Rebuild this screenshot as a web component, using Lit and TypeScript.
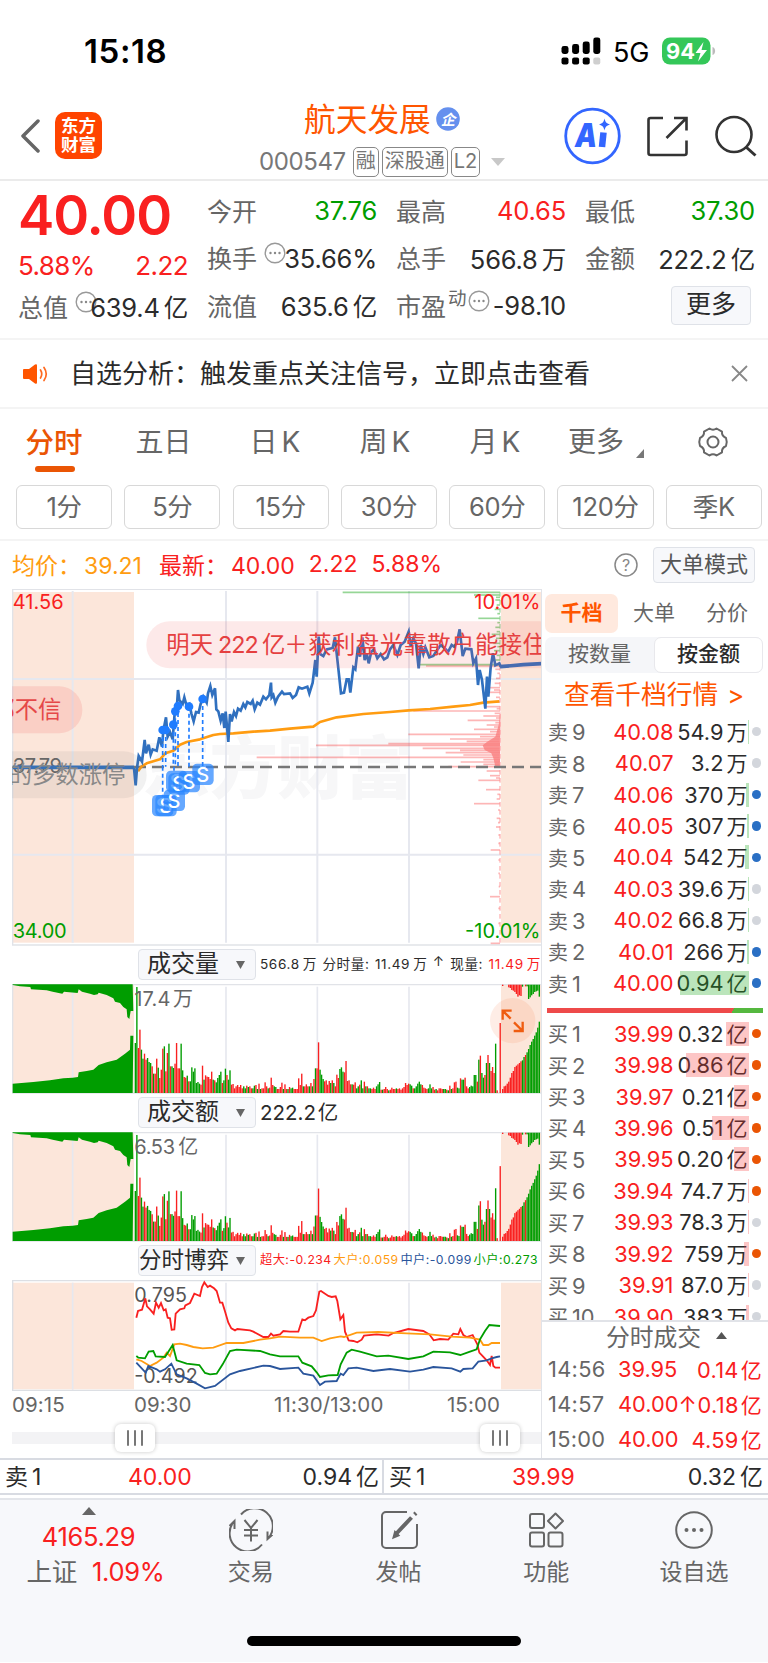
import { LitElement, html, svg, css } from 'lit';
import { customElement, property } from 'lit/decorators.js';
import { classMap } from 'lit/directives/class-map.js';

type Points = number[];

const UP = '#f92020';
const DOWN = '#009d00';
const GRID_X = [218, 678, 952, 1227];

const join = (a: Points, b: Points) =>
  [...a, ...b.map((v, i) => (i % 2 ? v : v + 810))].join(' ');

const PRICE = join(
  [402, 564, 407, 616, 411, 564, 416, 528, 426, 545, 434, 480, 438, 520, 446, 494, 452, 524, 458, 508, 470, 512, 478, 472, 486, 500, 490, 452, 498, 412, 503, 470, 510, 456, 518, 478, 524, 400, 530, 390, 534, 330, 538, 360, 548, 372, 553, 352, 560, 378, 568, 372, 574, 400, 581, 424, 588, 396, 596, 398, 602, 372, 610, 350, 620, 368, 624, 340, 631, 318, 637, 345, 645, 325, 649, 388, 655, 394, 662, 422, 668, 400, 673, 444, 677, 395, 685, 486, 690, 402, 695, 424, 702, 396, 708, 408, 714, 386, 722, 392, 730, 372, 736, 382, 742, 366, 752, 372, 758, 362, 764, 388, 772, 368, 780, 374, 790, 350, 798, 358, 808, 345, 813, 308],
  [5, 352, 10, 345, 16, 368, 24, 350, 36, 335, 42, 342, 60, 340, 68, 354, 78, 345, 86, 322, 96, 326, 112, 320, 118, 340, 128, 308, 136, 240, 140, 290, 146, 170, 150, 222, 160, 228, 170, 208, 188, 204, 195, 172, 200, 220, 206, 275, 213, 340, 222, 338, 230, 298, 236, 298, 241, 338, 250, 262, 256, 268, 264, 200, 270, 230, 277, 172, 284, 240, 290, 220, 296, 250, 304, 215, 312, 208, 322, 235, 332, 222, 342, 238, 352, 232, 360, 208, 370, 195, 382, 225, 392, 195, 404, 185, 416, 155, 422, 198, 430, 175, 438, 190, 446, 265, 452, 195, 460, 222, 466, 202, 478, 232, 490, 228, 500, 212, 512, 195, 524, 205, 534, 216, 545, 195, 552, 200, 560, 190, 569, 148, 578, 228, 586, 206, 604, 208, 610, 250, 618, 235, 624, 315, 629, 270, 636, 300, 646, 386, 651, 290, 655, 350, 662, 262, 669, 220, 676, 256, 688, 250, 692, 260],
);

const AVERAGE = join(
  [414, 574, 424, 560, 440, 550, 460, 544, 480, 538, 496, 520, 520, 512, 540, 494, 560, 486, 600, 478, 640, 465, 660, 462, 700, 460, 760, 455],
  [0, 452, 60, 446, 130, 440, 150, 426, 200, 412, 280, 402, 360, 396, 416, 391, 480, 387, 550, 380, 600, 375, 640, 368, 688, 364],
);

// [y, length] of the chips histogram growing leftwards from the close.
const CHIPS_GREEN = [[37, 472], [45, 78], [52, 12], [60, 14], [75, 10], [88, 16], [101, 8], [115, 65], [128, 8], [142, 14], [155, 10], [163, 25], [175, 12], [190, 20], [200, 8], [212, 18], [226, 10], [240, 14], [254, 240]];
const CHIPS_RED = [
  [258, 222], [268, 14], [280, 8], [295, 12], [310, 16], [323, 45], [330, 18], [337, 30], [352, 12], [366, 18], [380, 45], [386, 10], [393, 260], [400, 16], [408, 50], [414, 12], [421, 97], [428, 14], [435, 40], [441, 18], [448, 78], [455, 30], [463, 275], [470, 60], [477, 150], [484, 100], [491, 335], [496, 552], [505, 232], [511, 120], [518, 163], [525, 110], [532, 730], [539, 50], [546, 118], [553, 50], [560, 155], [573, 40], [587, 30], [594, 12], [601, 65], [629, 42], [643, 8], [657, 10], [671, 78], [690, 6], [715, 10], [728, 6], [741, 12], [765, 5], [790, 5], [810, 28], [840, 5], [880, 5], [920, 4], [950, 30], [985, 5], [1030, 5], [1090, 28],
];

const SELL_DOTS = [[488, 450], [497, 450], [520, 434], [526, 394], [534, 378], [567, 380], [608, 357]];
const SELL_TAGS = [[487, 677], [497, 677], [522, 661], [529, 604], [536, 612], [567, 605], [608, 583]];

// One bar a minute: sign gives the colour, value the height.
const VOLUME = [
  -150, -318, 135, 190, -130, -103, 118, 100, -105, -93, -90, 80, -58, 58, 103, -76, 45, 70, 133, -140, 65, 120, -148, 80, -80, -75, 88, 150, 74, 74,
  -148, -68, 48, 46, -52, 35, -35, -77, -64, -74, -30, -33, -28, 25, 82, -40, 53, 49, 48, 42, 64, -40, 38, -32, -45, -54, -64, 30, -38, -73,
  54, -40, -68, 25, 27, 14, 20, 24, 18, 24, 14, -20, -14, 22, -18, 20, 14, -14, -22, 24, -12, 28, -12, 14, 14, 32, 20, -14, 16, 46,
  24, -20, -18, 12, 12, 18, 31, -12, 26, 12, -12, 18, -14, -16, 12, 12, 12, 44, 24, 58, -20, 20, 26, 20, -20, 30, -20, 42, -74, 74,
  152, -70, -55, -42, 35, 38, 25, 36, -30, 38, -30, 20, 55, 45, -72, -77, -64, 62, 96, 36, 38, 26, -26, 25, 32, -14, -20, 25, -38, -14,
  34, -20, 20, -14, -14, 12, 16, 12, -20, -26, -33, 10, -10, 12, 18, 12, -8, 10, 16, 12, 12, -14, 12, 14, 10, 14, 18, 30, 24, 28,
  -26, -22, 14, -14, -20, -28, -34, -26, 24, 16, 14, 12, -14, -26, -14, 18, 10, -12, 8, 14, 14, 12, -12, -12, 10, -8, 22, -12, 14, 32,
  34, -16, -14, 44, -40, -40, 46, 20, 14, -18, -22, -20, -54, -54, 34, -100, 112, -60, -46, 54, -90, 114, -90, 66, 78, 60, -148, 8, 0, 210,
];
const AFTER_BOTTOM = [12, 20, 22, 28, 34, 46, 60, 66, 78, 82, 86, 90, 95, -98, -108, 114, -122, -132, -144, -154, -162, -172, -182, -196, -214];
const AFTER_TOP = [4, 0, 0, 0, 8, 10, 16, 18, 22, 28, 36, 32, 34, -6, 0, 5, -5, -43, -38, -32, -28, -22, -20, -18, -36];
const PRE_BOTTOM = [38, 28, 100, 33, 150, 38, 190, 44, 218, 46, 234, 48, 236, 62, 260, 66, 280, 70, 296, 84, 320, 92, 350, 100, 375, 118, 390, 130, 391, 172, 400, 172];
const PRE_TOP = [38, 2, 60, 6, 91, 8, 93, 15, 140, 18, 158, 22, 187, 28, 192, 22, 233, 26, 236, 15, 246, 22, 270, 28, 282, 32, 293, 30, 296, 25, 320, 32, 340, 42, 345, 52, 360, 56, 370, 68, 380, 75, 382, 98, 388, 104, 392, 80, 400, 80];

const FLOWS = [
  {
    color: UP,
    points: join(
      [409, 230, 414, 210, 426, 206, 436, 172, 441, 196, 450, 205, 461, 218, 468, 185, 476, 200, 483, 186, 491, 208, 497, 205, 503, 230, 510, 232, 515, 266, 523, 265, 527, 218, 540, 205, 553, 202, 556, 193, 570, 186, 583, 158, 600, 165, 606, 138, 613, 124, 623, 138, 630, 134, 642, 142, 650, 150, 660, 185, 667, 185, 674, 208, 685, 245, 694, 262, 705, 268, 712, 264, 750, 268, 760, 272, 790, 288, 805, 288],
      [3, 278, 10, 284, 30, 280, 40, 270, 60, 272, 85, 272, 92, 250, 97, 235, 105, 238, 115, 230, 130, 225, 138, 208, 148, 152, 153, 150, 175, 165, 185, 168, 197, 166, 202, 180, 211, 235, 220, 222, 225, 272, 236, 298, 250, 300, 262, 304, 275, 296, 282, 284, 320, 280, 356, 284, 370, 276, 415, 264, 460, 270, 478, 280, 491, 298, 510, 294, 535, 296, 550, 278, 565, 280, 571, 264, 580, 282, 590, 288, 608, 282, 622, 310, 628, 335, 650, 358, 660, 372, 665, 345, 670, 375, 676, 380, 690, 380],
    ),
  },
  {
    color: '#ff9c11',
    points: join(
      [409, 355, 425, 360, 450, 375, 470, 365, 490, 350, 500, 335, 510, 345, 523, 310, 540, 308, 560, 312, 580, 318, 608, 322, 640, 320, 680, 306, 730, 306, 780, 296],
      [0, 292, 30, 287, 90, 290, 130, 290, 155, 300, 180, 292, 212, 286, 222, 288, 260, 275, 325, 273, 410, 277, 480, 280, 545, 287, 600, 290, 630, 296, 640, 312, 655, 312, 665, 306, 690, 306],
    ),
  },
  {
    color: DOWN,
    points: join(
      [409, 345, 415, 350, 435, 352, 446, 332, 460, 330, 467, 346, 495, 348, 518, 312, 530, 358, 560, 368, 598, 372, 615, 396, 630, 400, 650, 398, 668, 370, 690, 330, 710, 326, 780, 330],
      [0, 340, 30, 346, 85, 346, 97, 365, 125, 376, 140, 394, 150, 408, 175, 403, 203, 402, 212, 370, 230, 335, 245, 326, 270, 332, 320, 346, 355, 344, 415, 354, 460, 346, 490, 332, 540, 334, 571, 342, 600, 332, 620, 325, 630, 295, 645, 270, 658, 252, 690, 255],
    ),
  },
  {
    color: '#2a559c',
    points: join(
      [409, 365, 437, 395, 445, 375, 470, 385, 480, 392, 495, 385, 514, 368, 530, 400, 560, 412, 590, 428, 615, 442, 645, 435, 690, 400, 720, 390, 790, 374],
      [0, 375, 30, 384, 85, 380, 100, 398, 130, 404, 150, 432, 165, 422, 200, 420, 212, 398, 220, 402, 235, 382, 260, 380, 310, 390, 360, 384, 420, 392, 460, 386, 490, 378, 545, 382, 571, 392, 580, 384, 608, 382, 625, 362, 650, 358, 665, 352, 680, 348, 690, 346],
    ),
  },
];

interface Level {
  name: string;
  price: string;
  amount: string;
  unit: string;
  bar: number;
  active: boolean;
}

const level = (name: string, price: string, amount: string, unit: string, bar: number, active: boolean): Level =>
  ({ name, price, amount, unit, bar, active });

const ASKS = [
  level('9', '40.08', '54.9', '万', 0.6, false),
  level('8', '40.07', '3.2', '万', 0, false),
  level('7', '40.06', '370', '万', 2.5, true),
  level('6', '40.05', '307', '万', 2, true),
  level('5', '40.04', '542', '万', 4, true),
  level('4', '40.03', '39.6', '万', 0.5, false),
  level('3', '40.02', '66.8', '万', 0.6, false),
  level('2', '40.01', '266', '万', 2, true),
  level('1', '40.00', '0.94', '亿', 69, true),
];

const BIDS = [
  level('1', '39.99', '0.32', '亿', 23, true),
  level('2', '39.98', '0.86', '亿', 63, true),
  level('3', '39.97', '0.21', '亿', 15, true),
  level('4', '39.96', '0.51', '亿', 37, true),
  level('5', '39.95', '0.20', '亿', 15, true),
  level('6', '39.94', '74.7', '万', 0.8, true),
  level('7', '39.93', '78.3', '万', 0.8, false),
  level('8', '39.92', '759', '万', 5, true),
  level('9', '39.91', '87.0', '万', 0.8, false),
  level('10', '39.90', '383', '万', 2.5, false),
];

const base = css`
  :host {
    display: block;
    font-family: 'Inter', 'Noto Sans CJK SC', sans-serif;
    color: #2b2b2b;
  }

  * {
    box-sizing: border-box;
  }

  svg {
    display: block;
    flex: none;
  }

  .red { color: #f92020; }
  .green { color: #009d00; }
`;

@customElement('status-bar')
export class StatusBar extends LitElement {
  static styles = [base, css`
    :host {
      height: 92px;
    }

    .bar {
      display: flex;
      align-items: center;
      height: 102px;
      padding: 0 52px 0 84px;
      color: #000;
    }

    .time {
      flex: 1;
      font-size: 33px;
      font-weight: 600;
      letter-spacing: 0.6px;
    }

    .net {
      width: 61px;
      padding-left: 12px;
      font-size: 27px;
      letter-spacing: -0.2px;
      padding-top: 2px;
    }
  `];

  render() {
    return html`
      <div class="bar">
        <div class="time">15:18</div>
        <svg width="40" height="28" viewBox="0 0 40 28">
          ${[8, 10, 12.5, 16.5].map((h, i) => svg`
            <rect x=${0.5 + i * 10.6} y=${17 - h} width="7" height=${h} rx="2.4" />
            <rect x=${0.5 + i * 10.6} y="20.5" width="7" height="7" rx="2" fill=${i === 3 ? '#cfcfcf' : '#000'} />
          `)}
        </svg>
        <div class="net">5G</div>
        <svg width="54" height="28" viewBox="0 0 54 28">
          <rect x="0" y="0.5" width="48.5" height="27" rx="8" fill="#34c759" />
          <path d="M50.5 10c3.5 1 3.5 7 0 8z" fill="#bbb" />
          <text x="4" y="21.8" font-size="21.5" font-weight="700" fill="#fff" textLength="29" lengthAdjust="spacingAndGlyphs">94</text>
          <path d="M41.5 5l-8 11h5l-2.5 8.500 9-11.500h-5.500z" fill="#fff" />
        </svg>
      </div>
    `;
  }
}

@customElement('title-bar')
export class TitleBar extends LitElement {
  static styles = [base, css`
    :host {
      height: 89px;
      border-bottom: 2px solid #ebebeb;
    }

    .bar {
      display: grid;
      grid-template-columns: 105px 1fr 206px;
      height: 87px;
      padding-left: 20px;
    }

    .side {
      display: flex;
      align-items: center;
    }

    .logo {
      width: 47px;
      height: 47px;
      margin-left: 15px;
      border-radius: 10px;
      background: #ff4400;
      color: #fff;
      font-size: 17.5px;
      font-weight: 700;
      line-height: 19px;
      padding-top: 4px;
      text-align: center;
    }

    .name {
      display: flex;
      align-items: center;
      gap: 5px;
      height: 36px;
      margin: 7px 0 0 179px;
      color: #ff5500;
      font-size: 31.7px;
      white-space: nowrap;
    }

    .name svg {
      margin-top: 3px;
    }

    .code {
      display: flex;
      align-items: center;
      gap: 3px;
      margin: 12px 0 0 134px;
      color: #777;
      font-size: 23px;
      line-height: 30px;
      white-space: nowrap;
    }

    .code b {
      font-weight: 400;
      font-size: 24px;
      margin-right: 4px;
      letter-spacing: -0.4px;
    }

    .tag {
      border: 1.5px solid #888;
      border-radius: 5px;
      height: 30px;
      padding: 0 2px;
      font-size: 20px;
      line-height: 26px;
    }

    .code svg {
      margin-left: 8px;
    }
  `];

  render() {
    return html`
      <div class="bar">
        <div class="side">
          <svg width="20" height="36" viewBox="0 0 20 36" fill="none" stroke="#666" stroke-width="3.500" stroke-linecap="round" stroke-linejoin="round">
            <path d="M18 3L3 18l15 15" />
          </svg>
          <div class="logo">东方<br />财富</div>
        </div>
        <div>
          <div class="name">
            航天发展
            <svg width="24" height="24" viewBox="0 0 24 24">
              <circle cx="12" cy="12" r="11.800" fill="#6590ee" />
              <text x="12" y="17.500" font-size="14.500" font-weight="700" font-style="italic" fill="#fff" text-anchor="middle">企</text>
            </svg>
          </div>
          <div class="code">
            <b>000547</b>
            <span class="tag">融</span>
            <span class="tag">深股通</span>
            <span class="tag">L2</span>
            <svg width="14" height="8" viewBox="0 0 14 8"><path d="M0 0h14L7 8z" fill="#c8c8c8" /></svg>
          </div>
        </div>
        <div class="side">
          <svg width="206" height="60" viewBox="0 0 206 60" fill="none">
            <circle cx="30.500" cy="30" r="26.800" stroke="#3366ff" stroke-width="2.800" />
            <text x="13" y="41" font-size="33" font-weight="900" font-style="italic" fill="#3366ff" textLength="22" lengthAdjust="spacingAndGlyphs">A</text>
            <path d="M41.500 26.500l-1.500 14.500" stroke="#3366ff" stroke-width="6.500" />
            <path d="M42.500 12.500c.9 3.800 1.800 4.800 5.500 6-3.700 1.200-4.600 2.200-5.500 6-.9-3.800-1.800-4.800-5.500-6 3.700-1.200 4.600-2.200 5.500-6z" fill="#3366ff" />
            <g stroke="#333" stroke-width="2.600">
              <path d="M101 12H88.500a2 2 0 0 0-2 2v33a2 2 0 0 0 2 2h34a2 2 0 0 0 2-2V34.500" />
              <path d="M112 12h12.500v12.500M124 12.500L104.500 32" />
              <circle cx="172" cy="28.500" r="17.500" />
              <path d="M184 41l9.500 8.500" stroke-width="3" />
            </g>
          </svg>
        </div>
      </div>
    `;
  }
}

const hint = html`
  <svg class="hint" width="22" height="22" viewBox="0 0 22 22">
    <circle cx="11" cy="11" r="9.800" fill="#fff" stroke="#999" stroke-width="1.400" />
    <g fill="#888"><circle cx="6.500" cy="11" r="1.200" /><circle cx="11" cy="11" r="1.200" /><circle cx="15.500" cy="11" r="1.200" /></g>
  </svg>
`;

@customElement('quote-summary')
export class QuoteSummary extends LitElement {
  static styles = [base, css`
    :host {
      height: 159px;
      border-bottom: 2px solid #f4f4f4;
    }

    .grid {
      display: grid;
      grid-template-columns: repeat(4, 170px);
      gap: 19px;
      padding: 3px 0 0 18px;
    }

    .price {
      height: 62px;
      line-height: 62px;
      font-size: 54.500px;
      font-weight: 600;
      letter-spacing: -1.1px;
      white-space: nowrap;
    }

    .row {
      display: flex;
      align-items: center;
      height: 47.5px;
      font-size: 25px;
      white-space: nowrap;
    }

    .row.change {
      height: 36px;
      padding-top: 3px;
      font-size: 26px;
      letter-spacing: -0.6px;
      justify-content: space-between;
    }

    .col:not(:first-child) {
      padding-top: 2px;
    }

    .label {
      color: #666;
      font-size: 25px;
    }

    .value {
      margin: 2px 0 0 auto;
      letter-spacing: -0.2px;
      font-size: 25.5px;
    }

    .value i {
      font-style: normal;
      margin-left: 4px;
      font-size: 24.500px;
    }

    .hint {
      margin: -8px -12px 0 7px;
    }

    sup {
      font-size: 18.5px;
      line-height: 20px;
      margin-top: -13px;
      margin-left: 2px;
      color: #666;
    }

    sup + .hint {
      margin-left: 1px;
    }

    .more {
      width: 80px;
      height: 39px;
      margin: 5px 4px 0 auto;
      border: 1.5px solid #dfe2e8;
      border-radius: 4px;
      background: #f7f8fb;
      text-align: center;
      font-size: 25px;
      line-height: 35px;
    }
  `];

  cell(label: string, value: string, unit = '', tone = '', mark: unknown = '') {
    return html`
      <div class="row">
        <span class="label">${label}</span>${mark}
        <span class="value ${tone}">${value}${unit ? html`<i>${unit}</i>` : ''}</span>
      </div>
    `;
  }

  render() {
    return html`
      <div class="grid">
        <div class="col">
          <div class="price red">40.00</div>
          <div class="row change red"><span>5.88%</span><span>2.22</span></div>
          ${this.cell('总值', '639.4', '亿', '', hint)}
        </div>
        <div class="col">
          ${this.cell('今开', '37.76', '', 'green')}
          ${this.cell('换手', '35.66%', '', '', hint)}
          ${this.cell('流值', '635.6', '亿')}
        </div>
        <div class="col">
          ${this.cell('最高', '40.65', '', 'red')}
          ${this.cell('总手', '566.8', '万')}
          ${this.cell('市盈', '-98.10', '', '', html`<sup>动</sup>${hint}`)}
        </div>
        <div class="col">
          ${this.cell('最低', '37.30', '', 'green')}
          ${this.cell('金额', '222.2', '亿')}
          <div class="more">更多</div>
        </div>
      </div>
    `;
  }
}

@customElement('signal-notice')
export class SignalNotice extends LitElement {
  static styles = [base, css`
    :host {
      height: 69px;
      border-bottom: 2px solid #f4f4f4;
    }

    .bar {
      display: flex;
      align-items: center;
      height: 67px;
      padding: 0 20px 0 22px;
      font-size: 26px;
    }

    .text {
      flex: 1;
      padding-left: 21px;
      margin-top: -4px;
      white-space: nowrap;
    }
  `];

  render() {
    return html`
      <div class="bar">
        <svg width="27" height="22" viewBox="0 0 27 22">
          <path d="M1 7q0-1 1-1h5l6-4.500q2-1 2 1v17q0 2-2 1L7 16H2q-1 0-1-1z" fill="#ff5500" />
          <path d="M18.500 7q2.500 4 0 8M22 4.500q4.500 6.500 0 13" fill="none" stroke="#ff6a20" stroke-width="1.700" stroke-linecap="round" />
        </svg>
        <div class="text">自选分析：触发重点关注信号，立即点击查看</div>
        <svg width="17" height="17" viewBox="0 0 17 17" stroke="#888" stroke-width="1.800"><path d="M1 1l15 15M16 1L1 16" /></svg>
      </div>
    `;
  }
}

@customElement('period-tabs')
export class PeriodTabs extends LitElement {
  static styles = [base, css`
    :host {
      height: 132px;
      border-bottom: 2px solid #f4f4f4;
    }

    .tabs {
      display: grid;
      grid-template-columns: repeat(7, 110px);
      height: 76px;
      color: #666;
      font-size: 28px;
      line-height: 67px;
      text-align: center;
      white-space: nowrap;
    }

    .tab span {
      margin-left: 4px;
    }

    .tab:nth-child(2) {
      text-indent: -3px;
    }

    .active {
      color: #ea5504;
      font-weight: 500;
      font-size: 28.500px;
      text-indent: -2px;
    }

    .active::after {
      content: '';
      display: block;
      width: 40px;
      height: 6px;
      margin: -10px auto 0;
      border-radius: 3px;
      background: #ea5504;
    }

    .more {
      display: flex;
      padding-left: 18px;
    }

    .more svg {
      margin: 40px 0 0 12px;
    }

    .gear {
      margin: 17px 0 0 37px;
    }

    .periods {
      display: flex;
      gap: 12.1px;
      padding-left: 16px;
    }

    .period {
      flex: none;
      width: 96.2px;
      height: 44px;
      border: 1.5px solid #d8d8d8;
      border-radius: 6px;
      color: #666;
      font-size: 25.500px;
      line-height: 42px;
      text-align: center;
      letter-spacing: -0.3px;
    }
  `];

  render() {
    return html`
      <div class="tabs">
        <div class="tab active">分时</div>
        <div class="tab">五日</div>
        <div class="tab">日<span>K</span></div>
        <div class="tab">周<span>K</span></div>
        <div class="tab">月<span>K</span></div>
        <div class="tab more">更多<svg width="8" height="9" viewBox="0 0 8 9"><path d="M8 0v9H0z" fill="#777" /></svg></div>
        <svg class="gear" width="32" height="32" viewBox="0 0 32 32" fill="none" stroke="#666" stroke-width="2">
          <path d="M12.500 2.500q3.500 2.500 7 0l5.500 3.200q-.5 4.300 4 6.300 1.500 4 0 8-4.500 2-4 6.300l-5.500 3.200q-3.500-2.500-7 0L7 26.300Q7.500 22 3 20q-1.500-4 0-8 4.500-2 4-6.300z" stroke-linejoin="round" />
          <circle cx="16" cy="16" r="5.500" />
        </svg>
      </div>
      <div class="periods">
        ${['1分', '5分', '15分', '30分', '60分', '120分', '季K'].map((p) => html`<div class="period">${p}</div>`)}
      </div>
    `;
  }
}

@customElement('price-chart')
export class PriceChart extends LitElement {
  static styles = [base, css`
    text {
      font-size: 60px;
    }

    .watermark {
      font-size: 205px;
      font-weight: 900;
      fill: #f7f7f8;
    }

    .chat {
      font-size: 70px;
    }

    .chat.long {
      letter-spacing: 1.5px;
    }
  `];

  render() {
    return html`
      <svg width="530" height="357" viewBox="36 27 1590 1071">
        <rect x="38" y="36" width="364" height="1052" fill="#fce6da" />
        <rect x="1503" y="36" width="122" height="1052" fill="#fce6da" />
        <text class="watermark" x="425" y="640" textLength="815">东方财富</text>
        <g stroke="#e6e8ef" stroke-width="6">
          ${GRID_X.map((x) => svg`<path d="M${x} 33V1088" />`)}
          <path d="M36 297H1626M36 824H1626" />
        </g>
        <path d="M36 28H1626M36 1095H1626M38 28V1095" fill="none" stroke="#e1e3e8" stroke-width="4" />

        <g stroke="#f92020" stroke-opacity="0.33" stroke-width="5">
          ${CHIPS_RED.map(([y, len]) => svg`<path d="M1500 ${y}h${-len}" />`)}
        </g>
        <path d="M1502 390l-6 45-10 35-22 14-16 12 6 14 20 10 6 14 6 26 14 4z" fill="#f98080" opacity="0.8" />
        <g stroke="#17a317" stroke-opacity="0.45" stroke-width="5">
          ${CHIPS_GREEN.map(([y, len]) => svg`<path d="M1500 ${y}h${-len}" />`)}
        </g>
        <path d="M1500 36V256" stroke="#8fd08f" stroke-width="3" stroke-dasharray="14 10" />
        <path d="M1500 258V1090" stroke="#f99" stroke-width="3" stroke-dasharray="14 10" />

        <path d="M402 561H1626" stroke="#777" stroke-width="7" stroke-dasharray="36 18" />
        <text x="38" y="579" fill="#666" textLength="148">37.79</text>
        <path d="M38 562H402" stroke="#3070bf" stroke-width="11" />
        <polyline points=${AVERAGE} fill="none" stroke="#ff9c11" stroke-width="8" stroke-linejoin="round" />
        <polyline points=${PRICE} fill="none" stroke="#3070bf" stroke-width="8" />
        <path d="M1500 260L1570 254 1626 251" fill="none" stroke="#3070bf" stroke-width="11" />

        ${SELL_DOTS.map(([x, y]) => svg`
          <path d="M${x} ${y}V560" stroke="#1f7cff" stroke-width="5" stroke-dasharray="12 9" />
          <circle cx=${x} cy=${y} r="13" fill="#1f7cff" />
        `)}
        <path d="M488 560V650M522 560V640" stroke="#1f7cff" stroke-width="5" stroke-dasharray="12 9" />
        ${SELL_TAGS.map(([x, y]) => svg`
          <rect x=${x - 31} y=${y - 32} width="64" height="64" rx="14" fill="#2a86ff" fill-opacity="0.72" />
          <text x=${x} y=${y + 22} text-anchor="middle" fill="#fff" font-weight="500">S</text>
        `)}

        <rect x="439" y="124" width="1250" height="141" rx="70" fill="#f04848" fill-opacity="0.12" />
        <g fill="#e54040">
          <text class="chat" x="499" y="219">明天</text>
          <text class="chat" x="654" y="219" textLength="122">222</text>
          <text class="chat" x="786" y="219">亿</text>
          <text class="chat long" x="853" y="219">＋获利盘光靠散户能接住</text>
        </g>
        <rect x="-120" y="319" width="367" height="141" rx="70" fill="#f04848" fill-opacity="0.14" />
        <text class="chat" x="184" y="414" fill="#e54848" text-anchor="end">都不信</text>
        <rect x="-120" y="514" width="560" height="141" rx="70" fill="#777" fill-opacity="0.1" />
        <text class="chat" x="376" y="609" fill="#888" text-anchor="end">的多数涨停</text>

        <text x="38" y="87" fill=${UP} textLength="153">41.56</text>
        <text x="38" y="1073" fill=${DOWN} textLength="162">34.00</text>
        <text x="1423" y="87" fill=${UP} textLength="198">10.01%</text>
        <text x="1395" y="1073" fill=${DOWN} textLength="226">-10.01%</text>
      </svg>
    `;
  }
}

@customElement('volume-chart')
export class VolumeChart extends LitElement {
  @property({ type: String }) peak = '';
  @property({ type: String }) unit = '';
  @property({ type: Number }) drift = 0;
  @property({ type: Boolean }) expandable = false;

  static styles = [base, css`
    text {
      font-size: 60px;
      fill: #666;
    }
  `];

  bars(values: number[], start: number, hanging = false) {
    return values.map((v, i) => {
      const h = Math.abs(v) * (hanging ? 1 : 1 + (this.drift * (start + i * 4.58 - 402)) / 1100);
      return svg`<rect x=${start + i * 4.58} y=${hanging ? 2 : 327 - h} width="4.1" height=${h} fill=${v > 0 ? UP : DOWN} />`;
    });
  }

  area(values: number[], top: boolean) {
    const pairs = [];
    for (let i = 0; i < values.length; i += 2) {
      pairs.push(`${values[i]} ${top ? values[i + 1] + 1 : 327 - values[i + 1]}`);
    }
    const edge = top ? 1 : 327;
    return svg`<polygon points=${`38 ${edge} ${pairs.join(' ')} 398 ${edge}`} fill=${DOWN} />`;
  }

  render() {
    const narrow = this.peak.startsWith('1');
    return html`
      <svg width="530" height="110" viewBox="36 0 1590 330">
        <rect x="38" y="2" width="364" height="325" fill="#fce6da" />
        <rect x="1503" y="2" width="122" height="325" fill="#fce6da" />
        <g stroke="#e6e8ef" stroke-width="5">
          ${GRID_X.map((x) => svg`<path d="M${x} 8V327" />`)}
        </g>
        <path d="M36 2H1626M36 327H1626M38 2V327" stroke="#e1e3e8" stroke-width="4" />
        ${this.area(PRE_TOP, true)}${this.area(PRE_BOTTOM, false)}
        ${this.bars(VOLUME, 404)}
        ${this.bars(AFTER_BOTTOM, 1506)}
        ${this.bars(AFTER_TOP, 1506, true)}
        <text x="403" y="65" textLength=${narrow ? 108 : 122}>${this.peak}</text>
        <text x=${narrow ? 519 : 535} y="65">${this.unit}</text>
        ${this.expandable ? svg`
          <circle cx="1538" cy="110" r="68" fill="#f5743c" fill-opacity="0.13" />
          <path d="M1532 104L1508 80M1508 107V80H1535M1542 115L1568 141M1568 113V141H1541" fill="none" stroke="#ef5c10" stroke-width="7" />
        ` : ''}
      </svg>
    `;
  }
}

@customElement('flow-chart')
export class FlowChart extends LitElement {
  static styles = [base, css`
    text {
      font-size: 59px;
      fill: #555;
    }
  `];

  render() {
    return html`
      <svg width="530" height="112" viewBox="36 117 1590 336">
        <rect x="38" y="125" width="364" height="320" fill="#fce6da" />
        <rect x="1503" y="125" width="122" height="320" fill="#fce6da" />
        <g stroke="#e6e8ef" stroke-width="5">
          ${GRID_X.map((x) => svg`<path d="M${x} 125V446" />`)}
        </g>
        <path d="M36 119H1626M36 448H1626M38 119V448" stroke="#dcdfe4" stroke-width="4" />
        <text x="403" y="183" textLength="158">0.795</text>
        <text x="403" y="426" textLength="190">-0.492</text>
        ${FLOWS.map((f) => svg`<polyline points=${f.points} fill="none" stroke=${f.color} stroke-width="5.500" />`)}
      </svg>
    `;
  }
}

@customElement('chart-column')
export class ChartColumn extends LitElement {
  static styles = [base, css`
    :host {
      flex: none;
      width: 541px;
      padding-left: 12px;
    }

    .head {
      display: flex;
      align-items: center;
      height: 38px;
      padding: 0 0 1px 126px;
      white-space: nowrap;
    }

    .select {
      display: flex;
      align-items: center;
      width: 118px;
      height: 31px;
      margin-right: 4px;
      padding-left: 8px;
      border: 1.5px solid #dfe2e8;
      border-radius: 4px;
      background: #f7f8fb;
      font-size: 24px;
      line-height: 26px;
    }

    .select span {
      margin-top: -1px;
    }

    .select.tight {
      padding-left: 0;
      font-size: 22.500px;
    }

    .select svg {
      margin-left: auto;
      margin-right: 10px;
    }

    .small {
      flex: 1;
      font-size: 13.6px;
      display: flex;
      justify-content: space-between;
      margin-top: -3px;
      letter-spacing: 0.6px;
    }

    .small.flows {
      font-size: 12.2px;
      padding-right: 3px;
      letter-spacing: 0.5px;
    }

    .sum {
      margin-top: -4px;
      font-size: 20.5px;
    }

    .times {
      display: grid;
      grid-template-columns: 122px 140px 1fr auto;
      height: 28px;
      padding-right: 41px;
      color: #666;
      font-size: 20.5px;
      letter-spacing: 0.1px;
      line-height: 26px;
    }

    .slider {
      display: flex;
      align-items: center;
      height: 38px;
      padding: 0 21px 0 103px;
      justify-content: space-between;
      background: linear-gradient(#f3f3f5, #f3f3f5) 0 12px / 529px 12px no-repeat;
    }

    .handle {
      display: flex;
      justify-content: center;
      gap: 4.5px;
      width: 40px;
      height: 28px;
      margin-top: -3px;
      padding-top: 6px;
      border-radius: 6px;
      background: #fff;
      box-shadow: 0 0 4px rgba(0, 0, 0, 0.22);
    }

    .handle i {
      width: 2.4px;
      height: 16px;
      border-radius: 1px;
      background: #777;
    }

    .orange { color: #ff9c11; }
    .blue { color: #2a559c; }
  `];

  select(label: string, tight = false) {
    return html`
      <div class=${classMap({ select: true, tight })}>
        <span>${label}</span>
        <svg width="9" height="8" viewBox="0 0 9 8"><path d="M0 0h9L4.500 8z" fill="#666" /></svg>
      </div>
    `;
  }

  render() {
    const handle = html`<div class="handle"><i></i><i></i><i></i></div>`;
    return html`
      <price-chart></price-chart>
      <div class="head">
        ${this.select('成交量')}
        <div class="small">
          <span>566.8&#8201;万</span><span>分时量:</span><span>11.49&#8201;万</span><span>↑</span><span>现量:</span><span class="red">11.49&#8201;万</span>
        </div>
      </div>
      <volume-chart peak="17.4" unit="万" expandable></volume-chart>
      <div class="head">
        ${this.select('成交额')}
        <div class="sum">222.2&#8202;亿</div>
      </div>
      <volume-chart peak="6.53" unit="亿" .drift=${0.07}></volume-chart>
      <div class="head">
        ${this.select('分时博弈', true)}
        <div class="small flows">
          <span class="red">超大:-0.234</span><span class="orange">大户:0.059</span><span class="blue">中户:-0.099</span><span class="green">小户:0.273</span>
        </div>
      </div>
      <flow-chart></flow-chart>
      <div class="times"><span>09:15</span><span>09:30</span><span>11:30/13:00</span><span>15:00</span></div>
      <div class="slider">${handle}${handle}</div>
    `;
  }
}

@customElement('order-book')
export class OrderBook extends LitElement {
  static styles = [base, css`
    :host {
      flex: none;
      width: 227px;
      height: 869px;
      border-left: 1.5px solid #e1e3e8;
      padding-left: 3px;
      background: #fff;
    }

    .tabs {
      display: grid;
      grid-template-columns: 73px 72px 74px;
      height: 39px;
      margin-top: 5px;
      color: #666;
      font-size: 21px;
      line-height: 37px;
      text-align: center;
    }

    .tabs .on {
      border-radius: 7px;
      background: #ffe9de;
      color: #ff5500;
      font-weight: 700;
    }

    .segments {
      display: grid;
      grid-template-columns: 109px 109px;
      height: 36px;
      margin-top: 4px;
      width: 218px;
      border-radius: 7px;
      background: #f5f6f9;
      color: #666;
      font-size: 21px;
      line-height: 33px;
      text-align: center;
    }

    .segments .on {
      border: 1.5px solid #e8e8ec;
      border-radius: 7px;
      background: #fff;
      color: #2b2b2b;
      font-weight: 500;
      line-height: 31px;
    }

    .link {
      display: flex;
      gap: 9px;
      height: 43px;
      padding-left: 19px;
      color: #ff5500;
      font-size: 25.7px;
      line-height: 43px;
      white-space: nowrap;
    }

    .bids {
      height: 302px;
      overflow: hidden;
    }

    .level {
      display: grid;
      grid-template-columns: 50px 75.5px 75px 14px;
      align-items: center;
      height: 31.45px;
      padding-left: 3px;
      font-size: 21.8px;
      white-space: nowrap;
    }

    .who {
      color: #666;
    }

    .who i {
      font-style: normal;
      font-size: 20px;
      margin-right: 4px;
    }

    .cost {
      text-align: right;
    }

    .amount {
      position: relative;
      height: 24px;
      line-height: 24px;
      padding-right: 1px;
      text-align: right;
    }

    .amount i {
      font-style: normal;
      font-size: 21px;
      margin-left: 3px;
    }

    .depth {
      position: absolute;
      top: 0;
      right: 0;
      height: 24px;
      background: rgba(249, 50, 50, 0.28);
    }

    .asks .depth {
      background: rgba(30, 170, 30, 0.3);
    }

    .dot {
      width: 9.5px;
      height: 9.5px;
      margin-left: 3px;
      border-radius: 50%;
      background: #d3d6dc;
    }

    .asks .dot.active { background: #2a6fc4; }
    .bids .dot.active { background: #ea5504; }

    .ratio {
      height: 5px;
      width: 216px;
      margin: 9px 0 5px 2px;
      background: linear-gradient(120deg, #ee4a4a 0 85.5%, #55b83f 85.5%);
    }

    .deals-head {
      display: flex;
      justify-content: center;
      align-items: center;
      gap: 15px;
      height: 31px;
      margin-left: -3px;
      padding: 0 0 2px 23px;
      border-top: 2px solid #e1e3e8;
      color: #666;
      font-size: 23.8px;
    }

    .deal {
      display: grid;
      grid-template-columns: 70px 1fr auto;
      align-items: center;
      height: 35.2px;
      padding: 0 6px 0 3px;
      color: #f92020;
      font-size: 21.8px;
      letter-spacing: 0.3px;
      white-space: nowrap;
    }

    .deal span:first-child {
      color: #666;
    }

    .deal span:nth-child(2) {
      letter-spacing: 0;
    }

    .deal i {
      font-style: normal;
      font-size: 21px;
      margin-left: 2px;
    }
  `];

  row(side: string, l: Level) {
    return html`
      <div class="level">
        <div class="who"><i>${side}</i>${l.name}</div>
        <div class="cost red">${l.price}</div>
        <div class="amount">${l.amount}<i>${l.unit}</i><div class="depth" style="width:${l.bar}px"></div></div>
        <div class=${classMap({ dot: true, active: l.active })}></div>
      </div>
    `;
  }

  render() {
    return html`
      <div class="tabs"><div class="on">千档</div><div>大单</div><div>分价</div></div>
      <div class="segments"><div>按数量</div><div class="on">按金额</div></div>
      <div class="link"><span>查看千档行情</span><span>&gt;</span></div>
      <div class="asks">${ASKS.map((l) => this.row('卖', l))}</div>
      <div class="ratio"></div>
      <div class="bids">${BIDS.map((l) => this.row('买', l))}</div>
      <div class="deals-head">分时成交<svg width="11" height="7" viewBox="0 0 11 7"><path d="M0 7h11L5.500 0z" fill="#555" /></svg></div>
      <div class="deal"><span>14:56</span><span>39.95</span><span>0.14<i>亿</i></span></div>
      <div class="deal"><span>14:57</span><span>40.00↑</span><span>0.18<i>亿</i></span></div>
      <div class="deal"><span>15:00</span><span>40.00</span><span>4.59<i>亿</i></span></div>
    `;
  }
}

@customElement('bottom-nav')
export class BottomNav extends LitElement {
  static styles = [base, css`
    :host {
      height: 164px;
      border-top: 2px solid #e3e5ea;
      background: #f7f8fb;
    }

    .items {
      display: grid;
      grid-template-columns: 177px repeat(4, 147.7px);
      height: 136px;
      color: #666;
      font-size: 23px;
      text-align: center;
    }

    .item {
      display: flex;
      flex-direction: column;
      align-items: center;
      padding-top: 9px;
      line-height: 34px;
    }

    .item svg {
      margin-bottom: 4px;
    }

    .index {
      padding-top: 7px;
      font-size: 25.500px;
      letter-spacing: -0.3px;
      white-space: nowrap;
      color: #f92020;
    }

    .index > svg {
      margin: 0 0 5px;
    }

    .index div {
      height: 35px;
    }

    .index div + div {
      padding-left: 14px;
    }

    .index span {
      color: #666;
      margin-right: 15px;
    }

    .home {
      width: 274px;
      height: 10px;
      margin: 0 auto;
      border-radius: 5px;
      background: #000;
    }
  `];

  render() {
    return html`
      <div class="items">
        <div class="item index">
          <svg width="14" height="8" viewBox="0 0 14 8"><path d="M0 8h14L7 0z" fill="#666" /></svg>
          <div>4165.29</div>
          <div><span>上证</span>1.09%</div>
        </div>
        <div class="item">
          <svg width="44" height="42" viewBox="0 0 44 42" fill="none" stroke="#666" stroke-width="2">
            <path d="M12 5.500A18 18 0 0 1 39.500 29M33 35.500A18 18 0 0 1 4.500 13M.5 17L5.500 12v8M43.500 25.500l-5 4.500v-7.500" />
            <path d="M15.500 11l6.500 8 6.500-8M15 21h14M15 26.500h14M22 19v13.500" />
          </svg>
          交易
        </div>
        <div class="item">
          <svg width="40" height="42" viewBox="0 0 40 42" fill="none" stroke="#666" stroke-width="2">
            <path d="M28 3H7a4 4 0 0 0-4 4v28a4 4 0 0 0 4 4h27a4 4 0 0 0 4-4V15" />
            <path d="M32.500 8.500L16.500 25.500M35.500 5.500l1.500-1.500" stroke-width="4" />
            <path d="M16 23l-1.500 5.500 5-2z" fill="#666" />
          </svg>
          发帖
        </div>
        <div class="item">
          <svg width="36" height="42" viewBox="0 0 36 42" fill="none" stroke="#666" stroke-width="2">
            <rect x="2" y="5" width="14" height="14" rx="2" />
            <rect x="2" y="23.500" width="14" height="14" rx="2" />
            <rect x="20.500" y="23.500" width="14" height="14" rx="2" />
            <path d="M27.500 4.500l7.500 7.500-7.500 7.500-7.500-7.500z" stroke-linejoin="round" />
          </svg>
          功能
        </div>
        <div class="item">
          <svg width="40" height="42" viewBox="0 0 40 42" fill="none" stroke="#666" stroke-width="2">
            <circle cx="20" cy="21" r="17.800" />
            <g fill="#666" stroke="none"><circle cx="12.500" cy="21" r="2" /><circle cx="20" cy="21" r="2" /><circle cx="27.500" cy="21" r="2" /></g>
          </svg>
          设自选
        </div>
      </div>
      <div class="home"></div>
    `;
  }
}

@customElement('app-root')
export class AppRoot extends LitElement {
  static styles = [base, css`
    :host {
      width: 768px;
      height: 1663px;
      background: #fff;
      overflow: hidden;
    }

    .info {
      display: flex;
      align-items: center;
      height: 48px;
      padding: 0 13px 0 12px;
      color: #f92020;
      font-size: 23px;
      white-space: nowrap;
    }

    .info > span {
      margin: -2px 14px 0 0;
    }

    .info .avg {
      margin-right: 17px;
      color: #ff9c11;
    }

    .info i {
      font-style: normal;
      margin-left: 3px;
    }

    .info svg {
      margin-left: auto;
      margin-right: 15px;
    }

    .mode {
      width: 102px;
      height: 36px;
      border: 1.5px solid #dfe2e8;
      border-radius: 4px;
      background: #f7f8fb;
      color: #555;
      font-size: 22px;
      line-height: 32px;
      text-align: center;
    }

    .body {
      display: flex;
      height: 869px;
    }

    .best {
      display: grid;
      grid-template-columns: 384px 384px;
      height: 37px;
      border-top: 2px solid #d8dbe2;
      border-bottom: 2px solid #d8dbe2;
    }

    .quote {
      display: grid;
      grid-template-columns: 123px 1fr auto;
      align-items: center;
      padding: 1px 3px 0 5px;
      font-size: 23px;
      line-height: 28px;
      border-right: 2px solid #d8dbe2;
    }

    .quote i {
      font-style: normal;
      line-height: 20px;
      margin: 0 4px;
    }

    .quote span:last-child i {
      margin-right: 0;
    }

    .quote:last-child {
      padding-right: 5px;
      border: 0;
    }

    .quote span:first-child i {
      margin-left: 0;
    }

    .strip {
      height: 3px;
    }
  `];

  render() {
    return html`
      <status-bar></status-bar>
      <title-bar></title-bar>
      <quote-summary></quote-summary>
      <signal-notice></signal-notice>
      <period-tabs></period-tabs>
      <div class="info">
        <span class="avg">均价：<i>39.21</i></span>
        <span>最新：<i>40.00</i></span>
        <span>2.22</span>
        <span>5.88%</span>
        <svg width="24" height="24" viewBox="0 0 24 24">
          <circle cx="12" cy="12" r="11" fill="none" stroke="#888" stroke-width="1.500" />
          <text x="12" y="17.500" font-size="16" fill="#888" text-anchor="middle">?</text>
        </svg>
        <div class="mode">大单模式</div>
      </div>
      <div class="body">
        <chart-column></chart-column>
        <order-book></order-book>
      </div>
      <div class="best">
        <div class="quote"><span><i>卖</i>1</span><span class="red">40.00</span><span>0.94<i>亿</i></span></div>
        <div class="quote"><span><i>买</i>1</span><span class="red">39.99</span><span>0.32<i>亿</i></span></div>
      </div>
      <div class="strip"></div>
      <bottom-nav></bottom-nav>
    `;
  }
}
